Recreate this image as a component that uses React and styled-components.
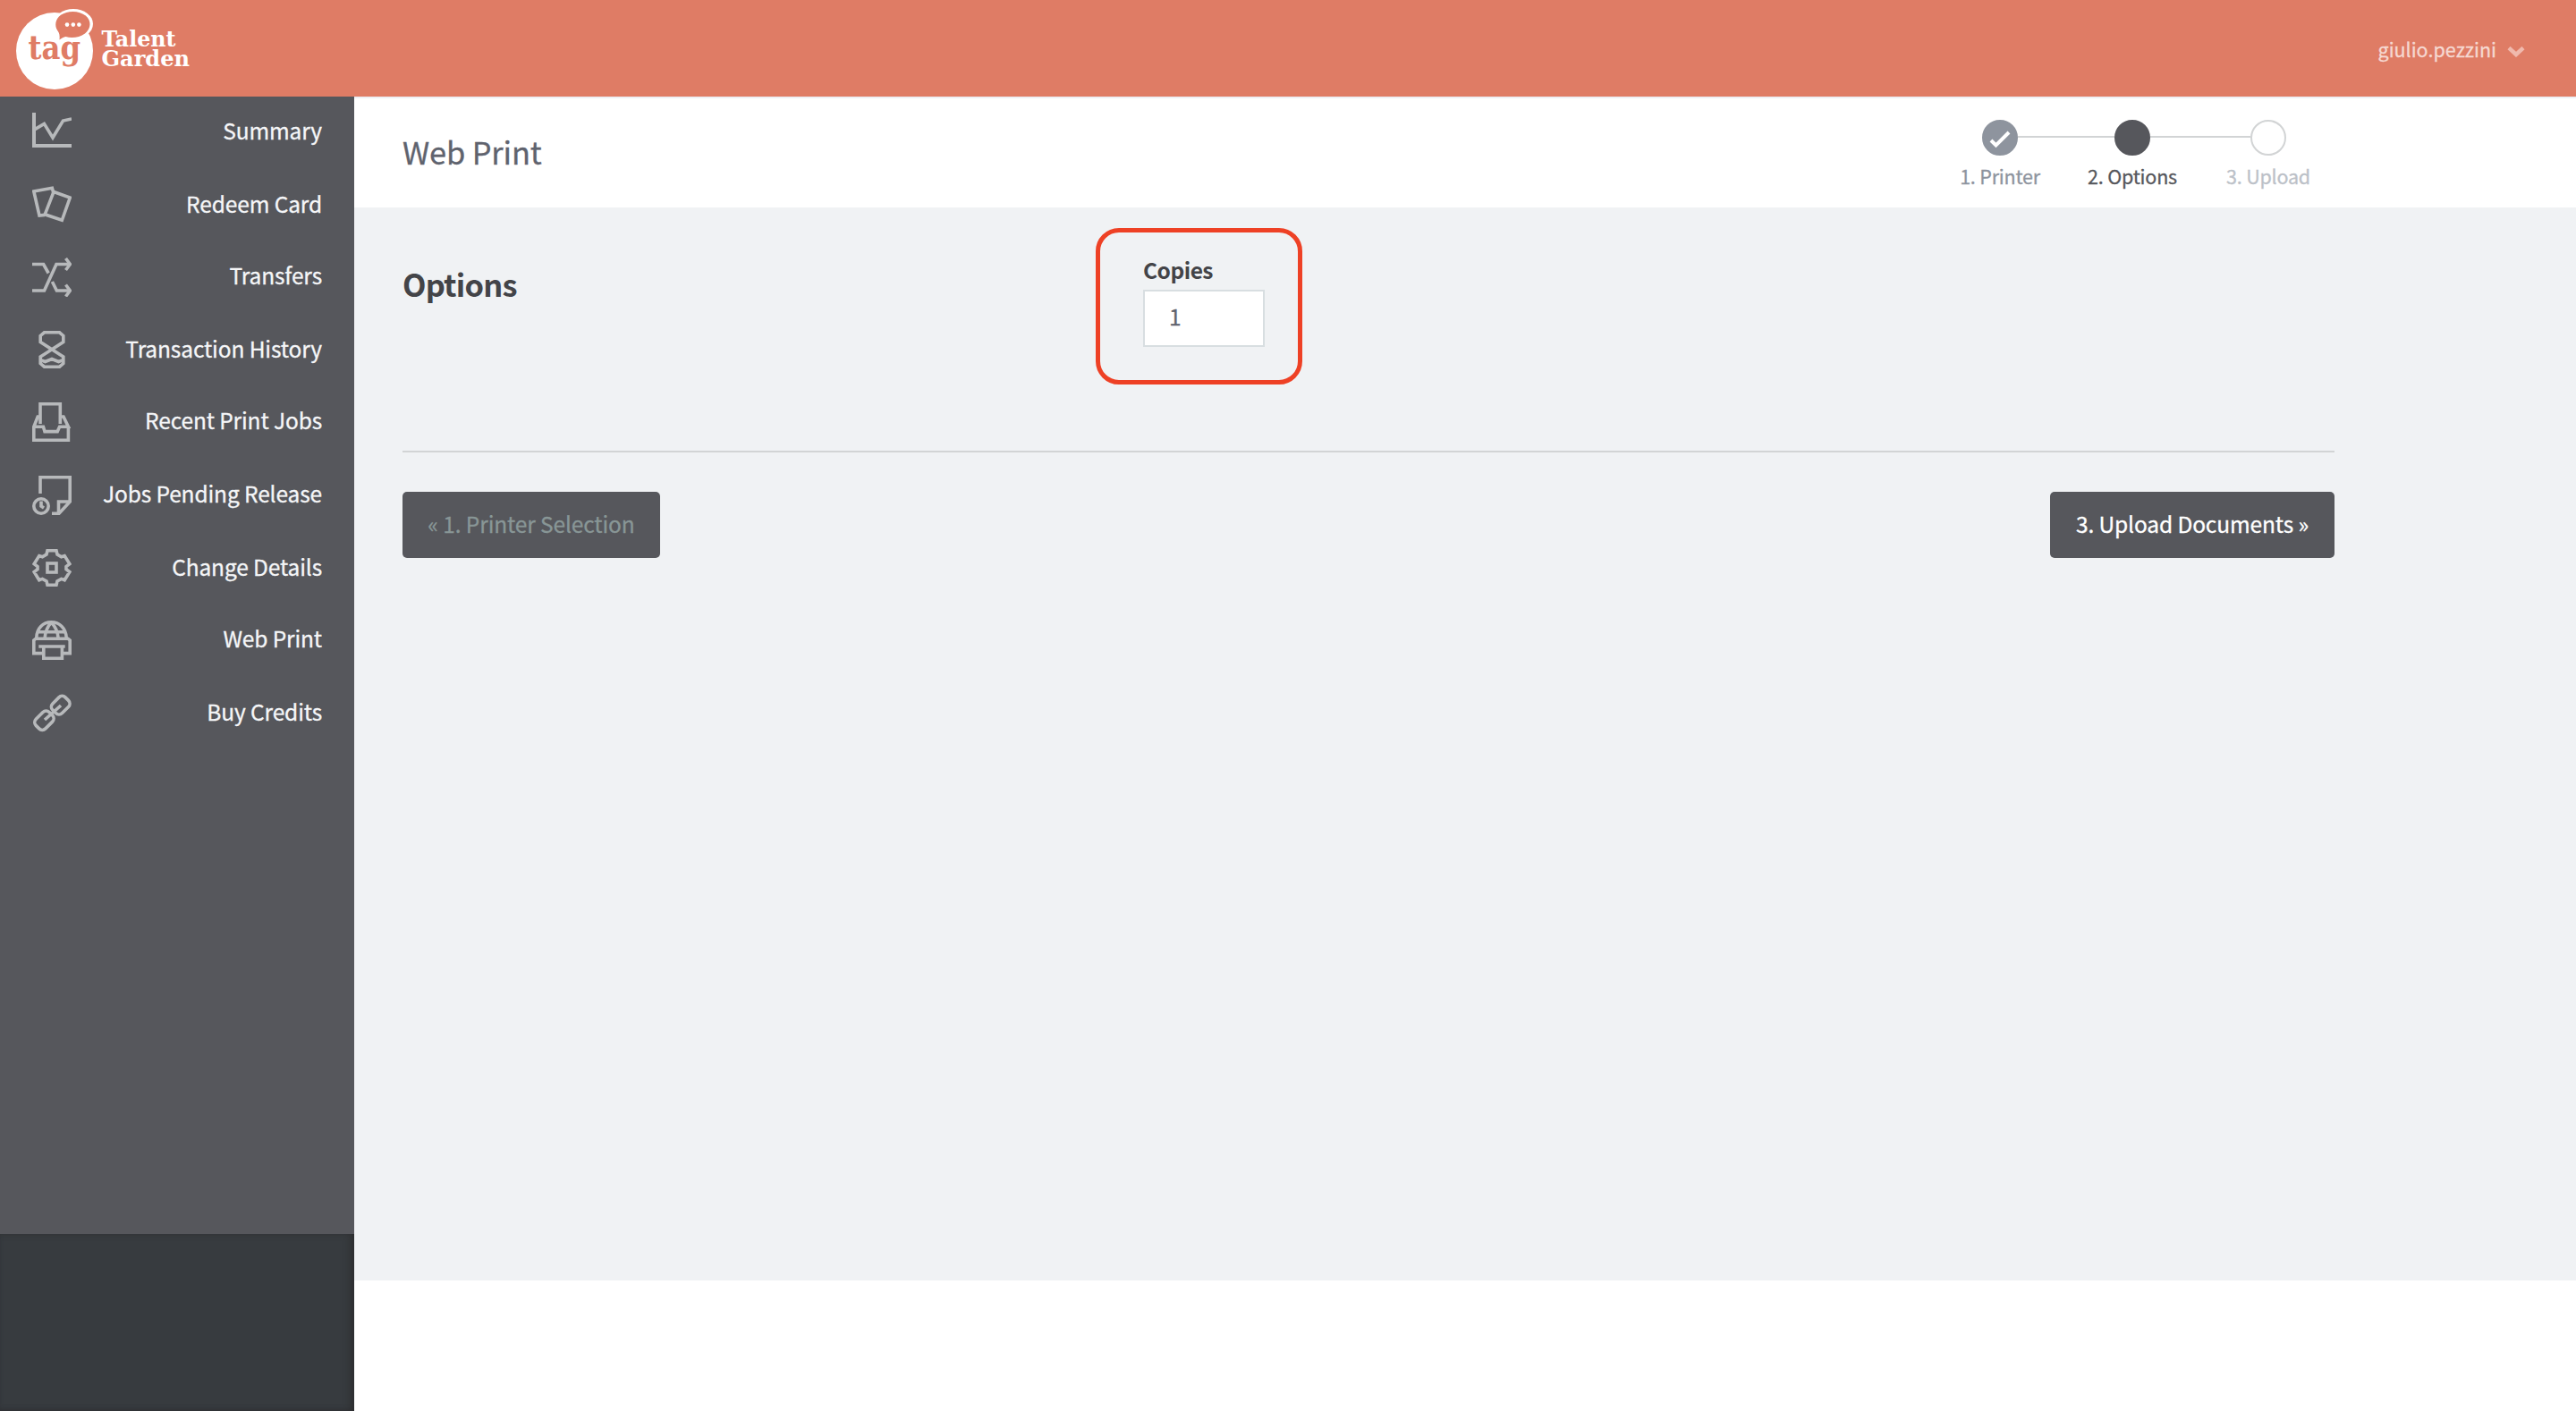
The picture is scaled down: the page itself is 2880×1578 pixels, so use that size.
import React, { Component } from "react";
import styled, { createGlobalStyle } from "styled-components";

const colors = {
  coral: '#df7c65',
  charcoal: '#56575c',
  footer: '#373b3f',
  page: '#f0f2f4',
  line: '#d2d4d5',
  slate: '#5f636e',
  dark: '#434448',
  gray: '#8e949e',
  lightGray: '#bcc1c8',
  icon: '#b7b9bb',
  red: '#ee4125'
};

const fontSizes = {
  small: '21.5px',
  regular: '24.5px',
  large: '34.4px'
};

const GlobalStyle = createGlobalStyle`
  * {
    box-sizing: border-box;
  }

  body {
    margin: 0;
    background: #ffffff;
    font-family: "Noto Sans CJK SC", "Noto Sans", sans-serif;
    font-size: ${fontSizes.regular};
    letter-spacing: -0.12px;
    -webkit-text-stroke: 0.3px;
  }

  h1, h2, p {
    margin: 0;
  }
`;

const icons = {
  summary: (
    <>
      <path d="M2 0V37H44" strokeWidth="4" />
      <path d="M3 18.6L13.4 12.4L23 28L34.5 9L44 7" />
    </>
  ),
  redeem: (
    <>
      <path d="M23.6 7L22.3 2.2L1.8 6L8 33L14 32.4" />
      <path d="M24 6.5L42.3 13L33.3 38.3L14.2 31.8Z" />
    </>
  ),
  transfers: (
    <>
      <path d="M0 7.5H12.6L18.2 17.5M22.4 27L27.4 37H42" />
      <path d="M0 37H13.5L27 7.5H42" />
      <path d="M37.5 1L42.4 7.5L37.5 14M37.5 30.5L42.4 37L37.5 43.5" />
    </>
  ),
  history: (
    <>
      <path d="M13.5 1.8H30.5L34.8 5.5V12.5L22 20.8L9.2 12.5V5.5Z" />
      <path d="M22 20.8L34.8 29V36.5L30.5 40.2H13.5L9.2 36.5V29Z" />
      <path d="M9 32.5L14.5 34.5L22 31.5L29.5 34.5L35 32.5" />
    </>
  ),
  recent: (
    <>
      <path d="M9 24V1.8H31.3V24" />
      <path d="M9 16H6.2L1.8 27.3H12.4L14 32.6H28.2L30.6 27.3H40.4L35 16H31.3" />
      <path d="M1.8 27V42.2H40.4V27" />
    </>
  ),
  pending: (
    <>
      <path d="M9 20V1.8H42.2V29L30 42.2H22" />
      <path d="M42.2 29H29.5V42.2" />
      <circle cx="10" cy="34" r="8.2" />
      <path d="M10 28.5V34L13 36" />
    </>
  ),
  details: (
    <>
      <path d="M17 1.8H27L28 6L32.6 8.8L36.2 7.6L41.8 16.6L38 19.6V22.6L41.8 25.6L36.2 34.8L32.6 33.4L28 36L27 40.2H17L16 36L11.4 33.4L7.8 34.8L2.2 25.6L6 22.6V19.6L2.2 16.6L7.8 7.6L11.4 8.8L16 6Z" />
      <rect x="17" y="16" width="10" height="10" />
    </>
  ),
  webPrint: (
    <>
      <path d="M4.8 19C5.2 8.5 12 1.8 21.3 1.8S37.6 8.5 38.2 19" />
      <path d="M21.3 2C17 7 14.6 12 14.2 19M21.3 2C26 7 28.6 12 29 19M6 12.8H37" />
      <path d="M12.5 36.6H1.8V22L4 20.2H40L42.2 22V36.6H33.5" />
      <path d="M7.3 29H36.7M12.8 29V42.2H33.4V29" />
    </>
  ),
  credits: (
    <>
      <rect x="21.7" y="5.2" width="20" height="15" rx="5" transform="rotate(-45 31.7 12.7)" />
      <rect x="2.9" y="22.2" width="21" height="15" rx="5" transform="rotate(-45 13.4 29.7)" />
      <path d="M14 29L32 13" />
    </>
  )
};

const navItems = [
  { label: 'Summary', icon: 'summary' },
  { label: 'Redeem Card', icon: 'redeem' },
  { label: 'Transfers', icon: 'transfers' },
  { label: 'Transaction History', icon: 'history' },
  { label: 'Recent Print Jobs', icon: 'recent' },
  { label: 'Jobs Pending Release', icon: 'pending' },
  { label: 'Change Details', icon: 'details' },
  { label: 'Web Print', icon: 'webPrint' },
  { label: 'Buy Credits', icon: 'credits' }
];

const steps = [
  { label: '1. Printer', status: 'done' },
  { label: '2. Options', status: 'current' },
  { label: '3. Upload', status: 'todo' }
];

const stepColors = {
  done: { dot: colors.gray, border: colors.gray, text: colors.gray },
  current: { dot: colors.charcoal, border: colors.charcoal, text: colors.charcoal },
  todo: { dot: '#ffffff', border: colors.line, text: colors.lightGray }
};

const Logo = () => (
  <LogoSvg viewBox="0 0 220 108">
    <circle cx="61" cy="57" r="43" fill="#ffffff" />
    <ellipse cx="82" cy="26.8" rx="22" ry="16.8" fill="#ffffff" />
    <path
      d="M66.5 44.5C67 40 66.5 37 64.5 34.5C60.5 29 62 21 68 16.8C76 11.2 89 11.8 95.8 17.6C102.5 23.5 102 32 95 37.4C89 42 80 42.8 73.5 41C71 41.5 69 42.5 66.5 44.5Z"
      fill={colors.coral}
    />
    <circle cx="75" cy="27.6" r="2.3" fill="#ffffff" />
    <circle cx="81.8" cy="27.6" r="2.3" fill="#ffffff" />
    <circle cx="88.4" cy="27.6" r="2.3" fill="#ffffff" />
    <TagText x="31.5" y="65.5" textLength="58.5" lengthAdjust="spacingAndGlyphs">tag</TagText>
    <BrandText>
      <tspan x="113.5" y="52.3" textLength="83" lengthAdjust="spacingAndGlyphs">Talent</tspan>
      <tspan x="113.5" y="73.8" textLength="98.5" lengthAdjust="spacingAndGlyphs">Garden</tspan>
    </BrandText>
  </LogoSvg>
);

class App extends Component {
  constructor(props) {
    super(props);

    this.state = {
      copies: '1'
    };
  }

  onCopiesChange = (event) => {
    this.setState({ copies: event.target.value });
  }

  renderNavItems = () => {
    return navItems.map(item => {
      return (
        <NavItem key={item.label}>
          <NavIcon viewBox="0 0 44 44">{icons[item.icon]}</NavIcon>
          <NavLabel>{item.label}</NavLabel>
        </NavItem>
      )
    })
  }

  renderSteps = () => {
    return steps.map((step, index) => {
      return (
        <Step key={step.label}>
          <Track>
            <Connector $hidden={index === 0} />
            <Dot $status={step.status}>
              {step.status === 'done' ?
                <Check viewBox="0 0 40 40">
                  <path d="M10 23L15.5 28.5L30 14" />
                </Check> : null}
            </Dot>
            <Connector $hidden={index === steps.length - 1} />
          </Track>
          <StepLabel $status={step.status}>{step.label}</StepLabel>
        </Step>
      )
    })
  }

  render() {
    return (
      <>
        <GlobalStyle />
        <Page>
          <Header>
            <Logo />
            <UserMenu>
              <span>giulio.pezzini</span>
              <Chevron viewBox="0 0 20 12">
                <path d="M2 1.5L10 9L18 1.5" />
              </Chevron>
            </UserMenu>
          </Header>
          <Body>
            <Sidebar>
              <Nav>{this.renderNavItems()}</Nav>
              <SidebarFooter />
            </Sidebar>
            <Main>
              <TitleBar>
                <Title>Web Print</Title>
                <Steps>{this.renderSteps()}</Steps>
              </TitleBar>
              <Content>
                <OptionsRow>
                  <SectionTitle>Options</SectionTitle>
                  <CopiesBox>
                    <CopiesLabel htmlFor="copies">Copies</CopiesLabel>
                    <CopiesInput
                      id="copies"
                      value={this.state.copies}
                      onChange={this.onCopiesChange}
                    />
                  </CopiesBox>
                </OptionsRow>
                <Actions>
                  <Button $muted $width="288px">« 1. Printer Selection</Button>
                  <Button $width="318px">3. Upload Documents »</Button>
                </Actions>
              </Content>
            </Main>
          </Body>
        </Page>
      </>
    );
  }
}

const Page = styled.div`
  display: flex;
  flex-direction: column;
  height: 1578px;
`;

const Header = styled.header`
  display: flex;
  justify-content: space-between;
  height: 108px;
  padding-right: 57px;
  background: ${colors.coral};
`;

const LogoSvg = styled.svg`
  width: 220px;
  height: 108px;
  letter-spacing: 0;
  -webkit-text-stroke: 0;
`;

const TagText = styled.text`
  fill: ${colors.coral};
  font-family: "DejaVu Serif", serif;
  font-size: 38px;
  font-weight: 700;
`;

const BrandText = styled.text`
  fill: #ffffff;
  font-family: "DejaVu Serif", serif;
  font-size: 25px;
  font-weight: 700;
`;

const UserMenu = styled.div`
  display: flex;
  align-items: center;
  gap: 12px;
  padding-top: 1px;
  color: #f6d8d1;
  font-size: ${fontSizes.small};
  letter-spacing: 0;
  line-height: 31px;
`;

const Chevron = styled.svg`
  width: 20px;
  height: 12px;
  margin-top: 6px;
  fill: none;
  stroke: #f0b9ad;
  stroke-width: 4.5;
`;

const Body = styled.div`
  display: flex;
  flex: 1;
`;

const Sidebar = styled.aside`
  display: flex;
  flex-direction: column;
  justify-content: space-between;
  width: 396px;
  background: ${colors.charcoal};
`;

const Nav = styled.nav`
  display: grid;
  grid-template-rows: 82px 80px 82px 80px 82px 82px 80px 82px 82px;
`;

const NavItem = styled.a`
  display: flex;
  justify-content: space-between;
  padding: 0 36px;
  color: #f5f6f8;
`;

const NavIcon = styled.svg`
  width: 44px;
  height: 44px;
  margin-top: 18px;
  fill: none;
  stroke: ${colors.icon};
  stroke-width: 3.6;
`;

const NavLabel = styled.span`
  line-height: 75px;
`;

const SidebarFooter = styled.div`
  height: 198px;
  background: ${colors.footer};
  box-shadow: inset -6px 0 10px -3px #2c2c2d, inset 0 -3px 6px -3px #2f3136;
`;

const Main = styled.main`
  flex: 1;
`;

const TitleBar = styled.div`
  display: flex;
  justify-content: space-between;
  height: 124px;
  padding: 0 266px 0 54px;
  background: #ffffff;
  border-top: 2px solid #eef0f5;
`;

const Title = styled.h1`
  color: ${colors.slate};
  font-size: ${fontSizes.large};
  font-weight: 400;
  line-height: 118px;
`;

const Steps = styled.div`
  display: grid;
  grid-template-columns: 148px 148px 156px;
  padding-top: 24px;
`;

const Step = styled.div`
  display: flex;
  flex-direction: column;
`;

const Track = styled.div`
  display: flex;
  align-items: center;
`;

const Connector = styled.div`
  flex: 1;
  height: 2px;
  margin-bottom: 2px;
  background: ${props => props.$hidden ? 'transparent' : colors.line};
`;

const Dot = styled.div`
  width: 40px;
  height: 40px;
  border: 2px solid ${props => stepColors[props.$status].border};
  border-radius: 50%;
  background: ${props => stepColors[props.$status].dot};
`;

const Check = styled.svg`
  display: block;
  width: 40px;
  height: 40px;
  margin: -2px;
  fill: none;
  stroke: #ffffff;
  stroke-width: 4;
`;

const StepLabel = styled.p`
  margin-top: 9px;
  color: ${props => stepColors[props.$status].text};
  font-size: ${fontSizes.small};
  letter-spacing: -0.2px;
  line-height: 27px;
  text-align: center;
`;

const Content = styled.section`
  height: 1200px;
  padding: 23px 270px 0 54px;
  background: ${colors.page};
`;

const OptionsRow = styled.div`
  display: grid;
  grid-template-columns: 775px 231px;
  height: 251px;
  border-bottom: 2px solid ${colors.line};
`;

const SectionTitle = styled.h2`
  padding-top: 38px;
  color: ${colors.dark};
  font-size: ${fontSizes.large};
  font-weight: 700;
  letter-spacing: -0.78px;
  line-height: 48px;
  -webkit-text-stroke: 0;
`;

const CopiesBox = styled.div`
  display: flex;
  flex-direction: column;
  height: 175px;
  padding: 28px 0 0 48px;
  border: 5px solid ${colors.red};
  border-radius: 26px;
`;

const CopiesLabel = styled.label`
  color: ${colors.dark};
  font-weight: 700;
  letter-spacing: -0.5px;
  line-height: 27px;
  -webkit-text-stroke: 0;
`;

const CopiesInput = styled.input`
  width: 136px;
  height: 64px;
  margin-top: 9px;
  padding: 0 27px 5px;
  border: 2px solid #d8dee1;
  background: #ffffff;
  color: ${colors.slate};
  font-family: inherit;
  font-size: ${fontSizes.regular};
`;

const Actions = styled.div`
  display: flex;
  justify-content: space-between;
  padding-top: 44px;
`;

const Button = styled.button`
  width: ${props => props.$width};
  height: 74px;
  padding: 0 0 3px;
  border: none;
  border-radius: 5px;
  background: ${colors.charcoal};
  color: ${props => props.$muted ? '#889696' : '#ffffff'};
  font-family: inherit;
  font-size: ${fontSizes.regular};
  letter-spacing: -0.12px;
  line-height: 71px;
`;

export default App;
